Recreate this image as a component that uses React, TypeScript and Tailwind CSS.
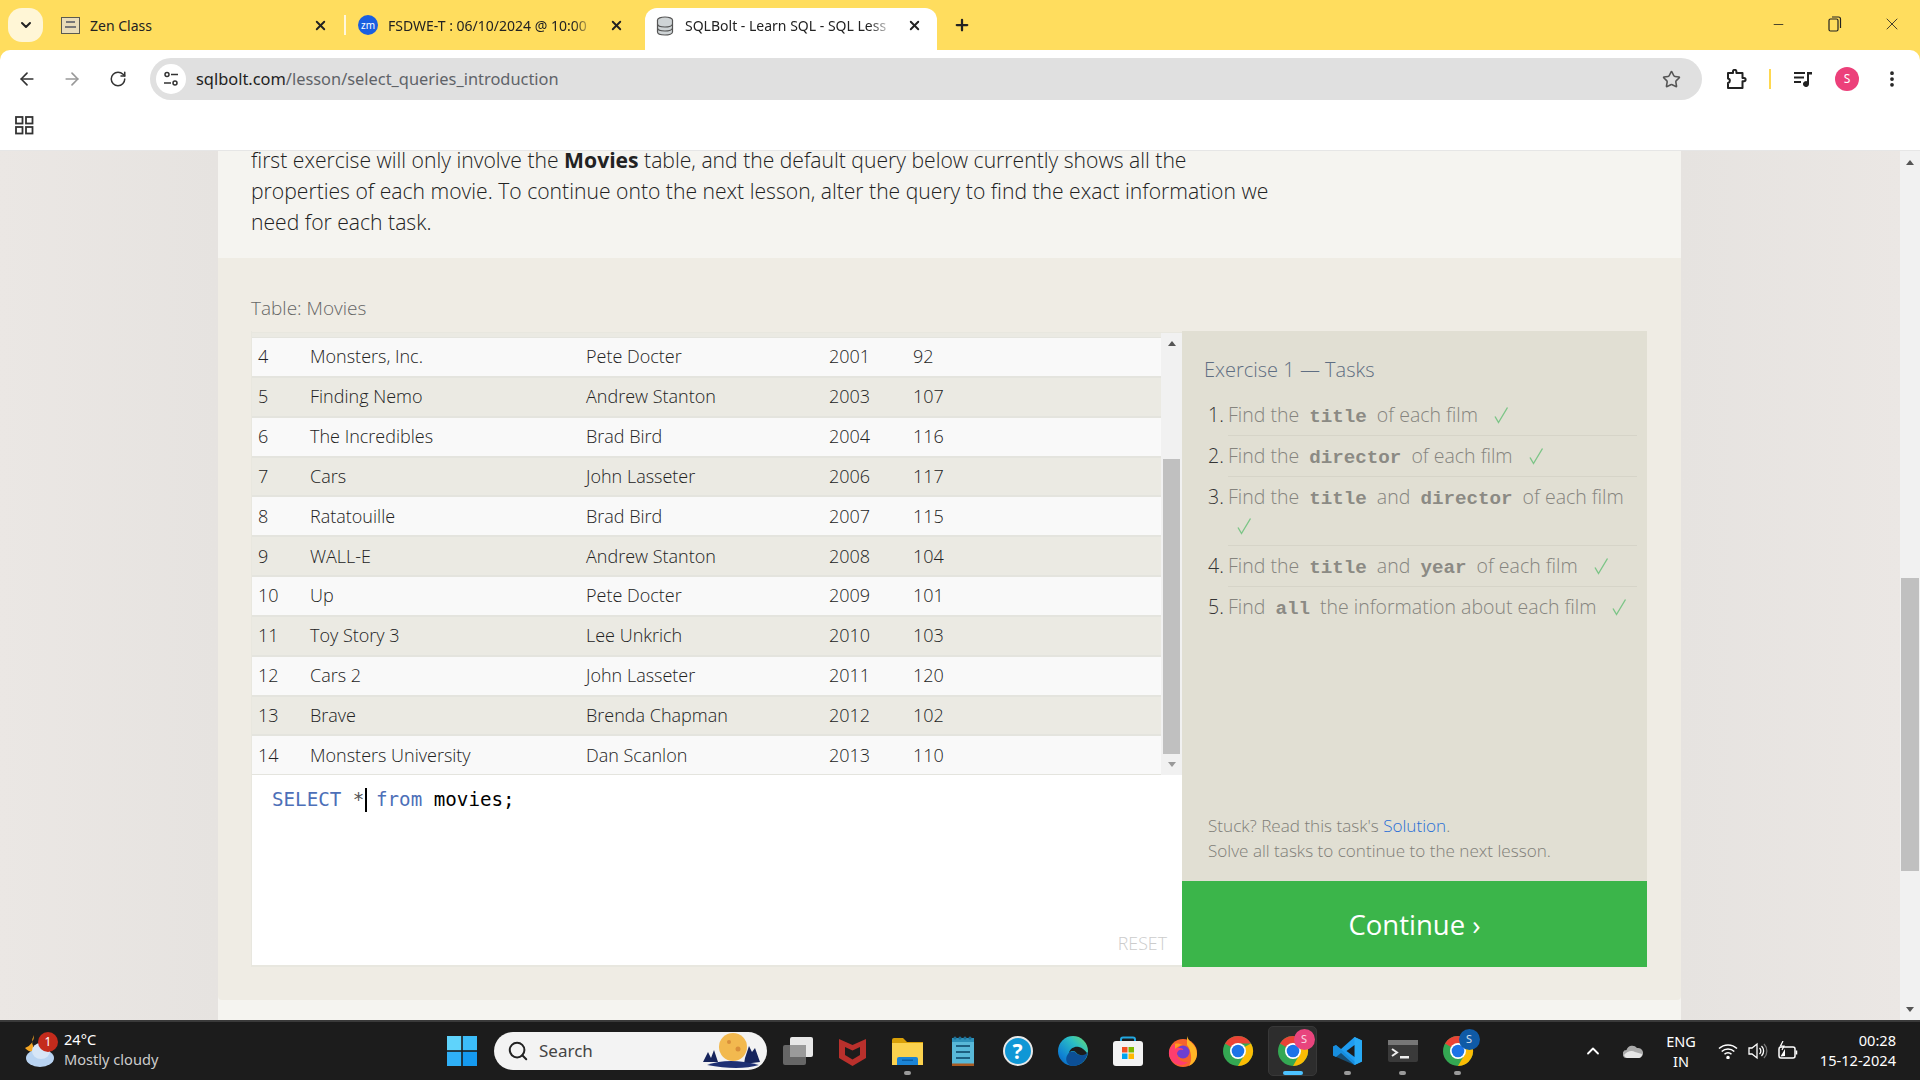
import React from 'react'
import { ArrowLeft, ArrowRight, RotateCw, Star, EllipsisVertical, X, Plus, ChevronDown, ChevronUp, Minus, Search } from 'lucide-react'

const movies = [
  [4, 'Monsters, Inc.', 'Pete Docter', 2001, 92],
  [5, 'Finding Nemo', 'Andrew Stanton', 2003, 107],
  [6, 'The Incredibles', 'Brad Bird', 2004, 116],
  [7, 'Cars', 'John Lasseter', 2006, 117],
  [8, 'Ratatouille', 'Brad Bird', 2007, 115],
  [9, 'WALL-E', 'Andrew Stanton', 2008, 104],
  [10, 'Up', 'Pete Docter', 2009, 101],
  [11, 'Toy Story 3', 'Lee Unkrich', 2010, 103],
  [12, 'Cars 2', 'John Lasseter', 2011, 120],
  [13, 'Brave', 'Brenda Chapman', 2012, 102],
  [14, 'Monsters University', 'Dan Scanlon', 2013, 110],
]

function Code({ children }: { children: string }) {
  return <code className="mx-[5px] font-['Liberation_Mono',monospace] text-[19.200px] font-bold leading-none text-[#8b8a84]">{children}</code>
}

function Check() {
  return <span className="ml-[16px] inline-block align-[-2px] leading-none"><svg width="15" height="18" viewBox="0 0 15 18" fill="none" stroke="#7cc587" strokeWidth="1.4"><path d="M1 10.5 L4.5 16.5 L13.5 1.5" /></svg></span>
}

function ChromeIcon() {
  return (
    <svg width="32" height="32" viewBox="0 0 32 32">
      <circle cx="16" cy="16" r="15" fill="#34a853" />
      <path d="M16 1a15 15 0 0 1 13 7.500H16a7.500 7.500 0 0 0-6.500 3.750L3 8.500A15 15 0 0 1 16 1z" fill="#ea4335" />
      <path d="M29 8.500A15 15 0 0 1 16 31l6.500-11.250A7.500 7.500 0 0 0 22.500 12z" fill="#fbbc04" />
      <circle cx="16" cy="16" r="8" fill="#fff" />
      <circle cx="16" cy="16" r="6.300" fill="#1a73e8" />
    </svg>
  )
}

function Tabs() {
  return (
    <div className="flex h-[50px] items-end bg-[#ffdd5e] pl-[8px] font-['Noto_Sans',sans-serif] text-[14px] text-[#222]">
      <div className="mb-[8px] flex h-[34px] w-[35px] items-center justify-center rounded-[14px] bg-[#fff6d6]">
        <ChevronDown size={16} strokeWidth={3} />
      </div>
      <div className="mb-[7px] ml-[7px] flex h-[36px] w-[294px] items-center pl-[11px]">
        <svg width="19" height="17" viewBox="0 0 19 17"><rect x="0.500" y="0.500" width="18" height="16" fill="#e9dcb8" stroke="#5a5a50" /><rect x="5" y="4" width="9" height="2" fill="#777" /><rect x="4" y="9" width="11" height="2" fill="#777" /></svg>
        <span className="ml-[10px] flex-1">Zen Class</span>
        <X size={15} strokeWidth={3} className="mr-[16px]" />
      </div>
      <div className="mb-[15px] h-[20px] w-[2px] bg-[#fff7dc]" />
      <div className="mb-[7px] flex h-[36px] w-[299px] items-center pl-[12px]">
        <div className="flex h-[20px] w-[20px] items-center justify-center rounded-full bg-[#1a5fe0] text-[10px] text-white">zm</div>
        <span className="ml-[10px] w-[206px] overflow-hidden whitespace-nowrap [mask-image:linear-gradient(to_right,black_90%,transparent)]">FSDWE-T : 06/10/2024 @ 10:00</span>
        <X size={15} strokeWidth={3} className="ml-[15px]" />
      </div>
      <div className="flex h-[42px] w-[292px] items-center rounded-t-[12px] bg-white pb-[7px] pl-[11px]">
        <svg width="18" height="20" viewBox="0 0 18 20" fill="#cfd4d6" stroke="#555" strokeWidth="1.2"><ellipse cx="9" cy="4" rx="7.500" ry="3" /><path d="M1.500 4v12c0 1.700 3.400 3 7.500 3s7.500-1.300 7.500-3V4" /><path d="M1.500 8c0 1.700 3.400 3 7.500 3s7.500-1.300 7.500-3M1.500 12c0 1.700 3.400 3 7.500 3s7.500-1.300 7.500-3" fill="none" /></svg>
        <span className="ml-[11px] w-[209px] overflow-hidden whitespace-nowrap [mask-image:linear-gradient(to_right,black_88%,transparent)]">SQLBolt - Learn SQL - SQL Less</span>
        <X size={15} strokeWidth={3} className="ml-[13px]" />
      </div>
      <div className="mb-[16px] ml-[16px] flex-1">
        <Plus size={18} strokeWidth={3} />
      </div>
      <div className="mb-[16px] flex w-[170px] items-center">
        <div className="flex w-[56px] justify-center"><Minus size={15} strokeWidth={1.3} /></div>
        <div className="flex w-[57px] justify-center">
          <svg width="14" height="16" viewBox="0 0 14 16" fill="none" stroke="#222" strokeWidth="1.2"><rect x="1" y="3" width="9" height="12" rx="1.500" /><path d="M4 1h6.500A2 2 0 0 1 12.500 3v9" /></svg>
        </div>
        <div className="flex w-[57px] justify-center"><X size={20} strokeWidth={1} /></div>
      </div>
    </div>
  )
}

function Toolbar() {
  return (
    <div className="bg-[#ffdd5e]">
      <div className="flex h-[50px] items-start rounded-t-[10px] bg-white pt-[8px] text-[#222]">
        <div className="flex h-[42px] w-[150px] items-center pl-[17px]">
          <ArrowLeft size={20} strokeWidth={2} className="text-[#333]" />
          <ArrowRight size={20} strokeWidth={2} className="ml-[25px] text-[#999]" />
          <RotateCw size={18} strokeWidth={2} className="ml-[27px] text-[#333]" />
        </div>
        <div className="flex h-[42px] w-[1552px] items-center rounded-full bg-[#e0e0e0] pl-[6px]">
          <div className="flex h-[30px] w-[30px] items-center justify-center rounded-full bg-white">
            <svg width="16" height="16" viewBox="0 0 16 16" fill="none" stroke="#333" strokeWidth="1.500"><circle cx="4" cy="3.500" r="2" /><path d="M8 3.500h7M1 12h7" /><circle cx="12" cy="12" r="2" /></svg>
          </div>
          <span className="ml-[10px] mt-[1px] flex-1 font-['Noto_Sans',sans-serif] text-[16.400px] text-[#5f6368]"><span className="text-[#222]">sqlbolt.com</span>/lesson/select_queries_introduction</span>
          <Star size={19} strokeWidth={2} className="mr-[21px] text-[#555]" />
        </div>
        <div className="flex h-[42px] flex-1 items-center">
          <svg className="ml-[24px]" width="21" height="21" viewBox="0 0 21 21" fill="none" stroke="#222" strokeWidth="2" strokeLinejoin="round"><path d="M2 4h5V2.500a1.700 1.700 0 0 1 3.400 0V4h6.100v5h1.500a1.600 1.600 0 0 1 0 3.200h-1.500V19H2v-5c2.500-.5 2.500-4 0-4.500z" /></svg>
          <div className="ml-[22px] h-[20px] w-[2px] bg-[#ffd84f]" />
          <svg className="ml-[23px]" width="18" height="16" viewBox="0 0 18 16" fill="#222"><rect x="0" y="1" width="11" height="2" /><rect x="0" y="5.500" width="10" height="2" /><rect x="0" y="10" width="7" height="2" /><path d="M13 1h5v2.500h-3V13a3 3 0 1 1-2-2.800z" /></svg>
          <div className="ml-[23px] flex h-[24px] w-[24px] items-center justify-center rounded-full bg-[#ec407a] font-['Noto_Sans',sans-serif] text-[12px] text-white">S</div>
          <EllipsisVertical size={20} strokeWidth={2.500} className="ml-[23px]" />
        </div>
      </div>
      <div className="flex h-[51px] items-center border-b border-[#e6e6e6] bg-white pl-[15px]">
        <svg width="19" height="19" viewBox="0 0 19 19" fill="none" stroke="#333" strokeWidth="1.800"><rect x="1" y="1" width="6.500" height="6.500" /><rect x="11" y="1" width="6.500" height="6.500" /><rect x="1" y="11" width="6.500" height="6.500" /><rect x="11" y="11" width="6.500" height="6.500" /></svg>
      </div>
    </div>
  )
}

function MoviesTable() {
  return (
    <div className="flex h-[443px] border-t border-[#e8e7df] bg-[#ebeae3]">
      <div className="flex-1 pt-[4px]">
        {movies.map((m, i) => (
          <div key={i} className={`grid h-[39.850px] grid-cols-[52px_276px_243px_84px_1fr] items-center border-y border-[#e4e4de] pl-[6px] ${i % 2 === 0 ? 'bg-[#f9f9f9]' : 'bg-[#ebeae3]'}`}>
            {m.map((v, j) => <div key={j}>{v}</div>)}
          </div>
        ))}
      </div>
      <div className="flex w-[21px] flex-col items-center bg-[#f1f1f1] px-[2px]">
        <div className="flex h-[22px] items-center"><div className="h-0 w-0 border-x-[4.500px] border-b-[5px] border-x-transparent border-b-[#555]" /></div>
        <div className="mt-[104px] h-[296px] w-full bg-[#c0c0c0]" />
        <div className="flex h-[21px] items-center"><div className="h-0 w-0 border-x-[4.500px] border-t-[5px] border-x-transparent border-t-[#999]" /></div>
      </div>
    </div>
  )
}

function Editor() {
  return (
    <div className="flex h-[192px] flex-col justify-between border-b-2 border-[#e8e7df] bg-white pb-[8px] pl-[20px] pr-[15px] pt-[13px]">
      <div className="flex h-[24px] items-center whitespace-pre font-['DejaVu_Sans_Mono',monospace] text-[19.200px]">
        <span className="text-[#4d6fb8]">SELECT</span>
        <span className="text-[#555]"> *</span>
        <span className="-mr-[3px] ml-[1px] inline-block h-[24px] w-0 border-l-2 border-black" />
        <span className="text-[#4d6fb8]"> from</span>
        <span className="text-black"> movies;</span>
      </div>
      <div className="self-end text-[17.800px] text-[#cccccc]">RESET</div>
    </div>
  )
}

function TaskPanel() {
  return (
    <div className="flex w-[465px] flex-col">
      <div className="flex h-[550px] flex-col justify-between bg-[#e1dfd3] pb-[18px] pl-[22px] pr-[10px] pt-[24px]">
        <div>
          <div className="text-[20px] leading-[30px] text-[#5f6e82]">Exercise 1 — Tasks</div>
          <ol className="mt-[10px] text-[19.500px] leading-[30px] text-[#85847e]">
            {[
              <>Find the <Code>title</Code> of each film<Check /></>,
              <>Find the <Code>director</Code> of each film<Check /></>,
              <>Find the <Code>title</Code> and <Code>director</Code> of each film<span className="-ml-[7px] block leading-[28px]"><Check /></span></>,
              <>Find the <Code>title</Code> and <Code>year</Code> of each film<Check /></>,
              <>Find <Code>all</Code> the information about each film<Check /></>,
            ].map((t, i, all) => (
              <li key={i} className="flex">
                <span className="w-[24px] pl-[4px] pt-[5px] text-[#333]">{i + 1}.</span>
                <div className={`flex-1 whitespace-nowrap pb-[5px] pt-[5px] ${i < all.length - 1 ? 'border-b border-[#d6d4c8]' : ''}`}>{t}</div>
              </li>
            ))}
          </ol>
        </div>
        <div className="pl-[4px] text-[17.100px] leading-[25px] text-[#7f7e78]">
          <div>Stuck? Read this task's <span className="text-[#2a6fd6]">Solution</span>.</div>
          <div>Solve all tasks to continue to the next lesson.</div>
        </div>
      </div>
      <div className="flex h-[86px] items-center justify-center bg-[#3bb54a] pt-[2px] text-[27.500px] font-normal text-white">Continue ›</div>
    </div>
  )
}

function Page() {
  return (
    <div className="flex h-[869px] overflow-hidden bg-[#e9e5e2] font-['Open_Sans',sans-serif] font-light text-[#222]">
      <div className="w-[218px] bg-gradient-to-r from-[#ebe7e4] to-[#e6e3e0]" />
      <div className="flex w-[1463px] flex-col bg-[#f5f4f0]">
        <div className="-mt-[7px] h-[114px] px-[33px] text-[21.150px] leading-[31px]">
          first exercise will only involve the <b className="font-bold">Movies</b> table, and the default query below currently shows all the<br />
          properties of each movie. To continue onto the next lesson, alter the query to find the exact information we<br />
          need for each task.
        </div>
        <div className="h-[742px] rounded-b-[4px] bg-[#efece4] px-[33px] pt-[32px]">
          <div className="h-[41px] text-[19px] leading-[36px] text-[#666]">Table: Movies</div>
          <div className="flex">
            <div className="w-[931px] border-l border-[#e8e7df] pt-[1px] text-[18px] text-[#222]">
              <MoviesTable />
              <Editor />
            </div>
            <TaskPanel />
          </div>
        </div>
      </div>
      <div className="flex-1 bg-gradient-to-r from-[#e6e3e0] to-[#ebe7e4]" />
      <div className="flex w-[20px] flex-col items-center bg-[#f1f1f1]">
        <div className="flex h-[22px] items-center"><div className="h-0 w-0 border-x-[4.500px] border-b-[5px] border-x-transparent border-b-[#555]" /></div>
        <div className="mt-[405px] h-[293px] w-[18px] bg-[#c0c0c0]" />
        <div className="mt-[127px] flex h-[22px] items-center"><div className="h-0 w-0 border-x-[4.500px] border-t-[5px] border-x-transparent border-t-[#555]" /></div>
      </div>
    </div>
  )
}

function TaskIcon({ children, active, dot }: { children: React.ReactNode; active?: boolean; dot?: boolean }) {
  return (
    <div className="relative flex h-[58px] w-[55px] items-center justify-center">
      {active && <div className="absolute inset-x-[3px] bottom-[4px] top-[4px] rounded-[5px] border border-[#383838] bg-[#2d2d2d]" />}
      <div className="relative flex">{children}</div>
      {dot && <div className="absolute bottom-[5px] left-[24px] h-[4px] w-[7px] rounded-full bg-[#9a9a9a]" />}
      {active && <div className="absolute bottom-[5px] left-[18px] h-[4px] w-[20px] rounded-full bg-[#4cc2ff]" />}
    </div>
  )
}

function ProfileBadge({ color }: { color: string }) {
  return <div className="absolute -right-[6px] -top-[6px] flex h-[21px] w-[21px] items-center justify-center rounded-full text-[11px] text-white/80" style={{ backgroundColor: color }}>S</div>
}

function Taskbar() {
  return (
    <div className="flex h-[60px] items-center border-t-2 border-[#3a3a3a] bg-[#1c1c1c] font-['Noto_Sans',sans-serif] text-white">
      <div className="relative ml-[24px] w-[40px]">
        <svg width="32" height="36" viewBox="0 0 32 36"><path d="M10 2a13 13 0 0 0 2 16 10 10 0 0 1-11-3 13 13 0 0 0 9-13z" fill="#f5a623" /><ellipse cx="16" cy="25" rx="14" ry="9" fill="#b9d4f2" /><ellipse cx="17" cy="18" rx="9" ry="8" fill="#d7e6f7" /></svg>
        <div className="absolute left-[14px] -top-[1px] flex h-[20px] w-[20px] items-center justify-center rounded-full bg-[#c42b1c] text-[12px]">1</div>
      </div>
      <div className="-mt-[4px] w-[383px] text-[14.600px] leading-[20.500px]">
        <div>24°C</div>
        <div className="text-[#ccc]">Mostly cloudy</div>
      </div>
      <svg width="30" height="30" viewBox="0 0 30 30"><rect width="14.200" height="14.200" fill="#5fd3fb" /><rect x="15.800" width="14.200" height="14.200" fill="#3cbdf9" /><rect y="15.800" width="14.200" height="14.200" fill="#2fb0f7" /><rect x="15.800" y="15.800" width="14.200" height="14.200" fill="#159af0" /></svg>
      <div className="ml-[17px] flex h-[38px] w-[273px] items-center overflow-hidden rounded-full bg-[#f3f3f3] pl-[13px] text-[#444]">
        <Search size={22} strokeWidth={2.200} className="text-[#222]" />
        <span className="ml-[10px] flex-1 text-[17px]">Search</span>
        <svg className="mr-[6px]" width="58" height="38" viewBox="0 0 58 38"><circle cx="30" cy="15" r="14" fill="#f2b94f" /><circle cx="26" cy="10" r="2" fill="#d98f3a" /><circle cx="35" cy="17" r="2.500" fill="#d98f3a" /><path d="M0 30l5-10 3 6 3-8 4 12zM42 26l4-12 3 6 3-4 5 14-16 2z" fill="#16245c" /><path d="M4 33q22-8 52 0q-20 6-52 0z" fill="#1d2f73" /></svg>
      </div>
      <div className="ml-[3px] flex">
        <TaskIcon>
          <svg width="30" height="28" viewBox="0 0 30 28"><rect x="0" y="8" width="23" height="20" rx="2" fill="#666" /><rect x="7" y="0" width="23" height="20" rx="2" fill="#e8e8e8" /><rect x="7" y="8" width="16" height="12" fill="#9a9a9a" /></svg>
        </TaskIcon>
        <TaskIcon>
          <svg width="27" height="30" viewBox="0 0 27 30"><path d="M0 3l13.500 6L27 3v19l-13.500 8L0 22z" fill="#b9302c" /><path d="M6 11l7.500 3.500L21 11v8l-7.500 4.500L6 19z" fill="#1c1c1c" /></svg>
        </TaskIcon>
        <TaskIcon dot>
          <svg width="31" height="27" viewBox="0 0 31 27"><path d="M0 2a2 2 0 0 1 2-2h9l4 4h16v3H0z" fill="#d9a008" /><path d="M0 5h31v22H0z" fill="#fbd24e" /><path d="M5 21a2 2 0 0 1 2-2h17a2 2 0 0 1 2 2v6H5z" fill="#1b84d6" /><rect x="10" y="21.500" width="11" height="1.500" fill="#0b5fa5" /></svg>
        </TaskIcon>
        <TaskIcon>
          <svg width="22" height="30" viewBox="0 0 22 30"><rect y="2" width="22" height="28" rx="1" fill="#58b8d8" /><rect y="2" width="22" height="4" fill="#2c90b8" /><circle cx="3" cy="2" r="1.500" fill="#1d6f96" /><circle cx="8" cy="2" r="1.500" fill="#1d6f96" /><circle cx="13" cy="2" r="1.500" fill="#1d6f96" /><circle cx="18" cy="2" r="1.500" fill="#1d6f96" /><rect y="27.500" width="22" height="2.500" fill="#a85a22" /><rect x="4" y="9" width="14" height="2" fill="#1d5f80" /><rect x="4" y="15" width="14" height="2" fill="#1d5f80" /><rect x="4" y="21" width="14" height="2" fill="#1d5f80" /></svg>
        </TaskIcon>
        <TaskIcon>
          <div className="flex h-[30px] w-[30px] items-center justify-center rounded-full border-2 border-[#e8e8e8] bg-[#0f97d6] text-[21px] font-bold leading-none">?</div>
        </TaskIcon>
        <TaskIcon>
          <svg width="30" height="30" viewBox="0 0 30 30">
            <defs><linearGradient id="edge" x1="1" y1="0" x2="0" y2="1"><stop offset="0" stopColor="#6fdc6a" /><stop offset="0.35" stopColor="#2bbfc4" /><stop offset="0.75" stopColor="#0f82d4" /><stop offset="1" stopColor="#0b5eb0" /></linearGradient></defs>
            <circle cx="15" cy="15" r="15" fill="url(#edge)" />
            <path d="M30 16c-1 8-8 14-15 14-6 0-9-7-5-12 2-3 6-3 8-1 3 3 8 3 12-1z" fill="#0c4f96" />
            <path d="M29 17c-3 3-8 3-11-.5-2-2-5-2-7 .5 1-5 6-7 10-6 3 .7 6 3 8 6z" fill="#1c1c1c" />
          </svg>
        </TaskIcon>
        <TaskIcon>
          <svg width="30" height="30" viewBox="0 0 30 30"><path d="M8 7V3.500A2 2 0 0 1 10 1.500h10a2 2 0 0 1 2 2V7" fill="none" stroke="#22a7e0" strokeWidth="2" /><rect y="5" width="30" height="25" rx="3" fill="#f3f3f3" /><rect x="9" y="11" width="5.500" height="5.500" fill="#f25022" /><rect x="15.500" y="11" width="5.500" height="5.500" fill="#7fba00" /><rect x="9" y="17.500" width="5.500" height="5.500" fill="#00a4ef" /><rect x="15.500" y="17.500" width="5.500" height="5.500" fill="#ffb900" /></svg>
        </TaskIcon>
        <TaskIcon>
          <svg width="30" height="32" viewBox="0 0 30 32"><circle cx="15" cy="18" r="14" fill="#f7632d" /><path d="M19 1c1 6 10 8 10 18a14 14 0 0 1-8 12c4-6 2-16-2-21z" fill="#ffb526" /><circle cx="15" cy="17" r="6.500" fill="#6e3fd0" /><path d="M1 16c1-3 3-6 6-7-1 2 1 4 4 4 3 0 5 1 4 2-2-1-6 0-6 4 0 5 5 9 11 8-3 3-6 3-8 3-7-1-12-7-11-14z" fill="#ff3d6e" /><path d="M7 9c2-1 5 0 8 1-3 0-6 2-8 4z" fill="#ff9a1f" /></svg>
        </TaskIcon>
        <TaskIcon><ChromeIcon /></TaskIcon>
        <TaskIcon active><ChromeIcon /><ProfileBadge color="#e8447d" /></TaskIcon>
        <TaskIcon dot>
          <svg width="30" height="30" viewBox="0 0 30 30"><path d="M21.500 1L29 4.500v21L21.500 29 8 17l-5 4-3-1.500v-9L3 9l5 4z" fill="#1f9cf0" /><path d="M21.500 1L29 4.500v21L21.500 29z" fill="#28aaf5" /><path d="M21.500 9l-8 6 8 6z" fill="#1c1c1c" /><path d="M0 10.500L3 9l18.500 16.500V29L0 19.500z" fill="#0f7fcd" opacity="0.5" /></svg>
        </TaskIcon>
        <TaskIcon dot>
          <svg width="30" height="22" viewBox="0 0 30 22"><rect width="30" height="22" rx="2" fill="#3a3a3a" /><rect width="30" height="5" fill="#777" /><path d="M4 9l5 3.500-5 3.500" fill="none" stroke="#eee" strokeWidth="2" /><rect x="12" y="16" width="9" height="2.500" fill="#eee" /></svg>
        </TaskIcon>
        <TaskIcon dot><ChromeIcon /><ProfileBadge color="#0f5aa6" /></TaskIcon>
      </div>
      <ChevronUp size={20} strokeWidth={2.200} className="ml-[98px]" />
      <svg className="ml-[20px]" width="20" height="14" viewBox="0 0 20 14"><path d="M4 14a4 4 0 0 1-.5-8A6 6 0 0 1 14 4a5 5 0 0 1 2 10z" fill="#aaa" /><path d="M1 11c3-4 8-5 11-3l7 2a4 4 0 0 1-3 4H4a4 4 0 0 1-3-3z" fill="#e6e6e6" /></svg>
      <div className="ml-[21px] w-[34px] text-center text-[14.500px] leading-[20px]">ENG<br />IN</div>
      <svg className="ml-[20px]" width="20" height="16" viewBox="0 0 20 16" fill="none" stroke="#fff" strokeWidth="1.500"><path d="M1 5.500a13 13 0 0 1 18 0M3.700 8.500a9 9 0 0 1 12.600 0M6.500 11.300a5 5 0 0 1 7 0" /><circle cx="10" cy="14.500" r="1" fill="#fff" /></svg>
      <svg className="ml-[10px]" width="20" height="18" viewBox="0 0 20 18" fill="none" stroke="#fff" strokeWidth="1.300"><path d="M1 6h3l5-4v14l-5-4H1z" /><path d="M11.500 6a4 4 0 0 1 0 6M13.500 4a7 7 0 0 1 0 10" /><path d="M16 2a10 10 0 0 1 0 14" stroke="#777" /></svg>
      <svg className="ml-[10px]" width="20" height="20" viewBox="0 0 20 20" fill="none" stroke="#fff" strokeWidth="1.500"><rect x="1" y="6" width="16" height="11" rx="2" /><path d="M18.500 9.500v4" /><path d="M2.500 15.500L7 8v7z" fill="#fff" stroke="none" /><path d="M5 0L2.500 5H6L4 9" strokeWidth="1.200" /></svg>
      <div className="-mt-[2px] w-[98px] text-right text-[14.600px] leading-[20px]">00:28<br />15-12-2024</div>
    </div>
  )
}

export default function App() {
  return (
    <div className="h-[1080px] w-[1920px] overflow-hidden">
      <Tabs />
      <Toolbar />
      <Page />
      <Taskbar />
    </div>
  )
}
